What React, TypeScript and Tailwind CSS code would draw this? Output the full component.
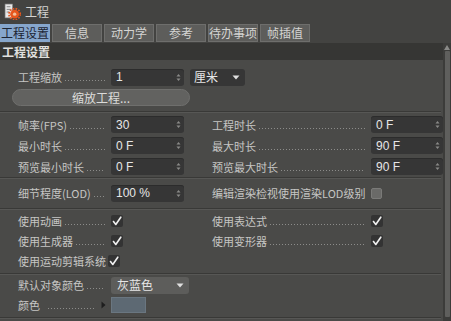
import React from 'react'

const font = { fontFamily: '"Noto Sans CJK SC", "Liberation Sans", sans-serif' }

function Spinner() {
  return (
    <svg width="5" height="9" viewBox="0 0 5 9" className="shrink-0">
      <path d="M0.5 3.5 L2.5 1 L4.5 3.5 Z" fill="#8a8a88" />
      <path d="M0.5 5.5 L2.5 8 L4.5 5.5 Z" fill="#8a8a88" />
    </svg>
  )
}

function Dots({ className = '' }: { className?: string }) {
  return <span className={`flex-1 h-[1px] mb-[4px] bg-[linear-gradient(to_right,#8c8c8a_1px,transparent_1px)] bg-[length:3px_1px] ${className}`} />
}

function Label({ text, w }: { text: string; w: string }) {
  return (
    <div className={`flex items-end shrink-0 ${w} pr-[6px]`}>
      <span className="whitespace-nowrap leading-[16px]">{text}</span>
      <Dots className="ml-[3px] min-w-[6px]" />
    </div>
  )
}

function Field({ value, w = 'w-[73px]' }: { value: string; w?: string }) {
  return (
    <div className={`${w} h-[17px] shrink-0 bg-[#363636] rounded-[3px] flex items-center justify-between pl-[5px] pr-[3px] text-[12px] text-[#e6e6e6] shadow-[inset_0_1px_0_#2c2c2c]`}>
      <span style={{ fontFamily: '"Liberation Sans", sans-serif' }}>{value}</span>
      <Spinner />
    </div>
  )
}

function Check({ on = true }: { on?: boolean }) {
  if (!on) {
    return <div className="w-[11px] h-[11px] shrink-0 rounded-[2px] bg-[#6a6a68] border border-[#7a7a78]" />
  }
  return (
    <div className="w-[12px] h-[12px] shrink-0 rounded-[2px] bg-[#333] flex items-center justify-center">
      <svg width="10" height="10" viewBox="0 0 10 10">
        <path d="M1.5 5.5 L3.8 8.5 L8.8 1.2" stroke="#f0f0f0" strokeWidth="1.6" fill="none" strokeLinecap="round" strokeLinejoin="round" />
      </svg>
    </div>
  )
}

function Sep() {
  return <div className="h-[2px] border-t border-[#393937] border-b border-b-[#575755] mr-[2px]" />
}

function Row({ children, h = 'h-[20px]' }: { children: React.ReactNode; h?: string }) {
  return <div className={`flex items-center ${h} pl-[18px]`}>{children}</div>
}

const tabs = ['工程设置', '信息', '动力学', '参考', '待办事项', '帧插值']

export default function App() {
  return (
    <div className="w-[451px] h-[321px] bg-[#4a4a48] overflow-hidden text-[11px] text-[#c6c6c4] flex flex-col" style={font}>
      {/* Title bar */}
      <div className="h-[23px] bg-[#434341] flex items-center pl-[4px] gap-[4px] shrink-0">
        <svg width="17" height="17" viewBox="0 0 16 16">
          <rect x="1" y="1" width="7" height="13" fill="#e8e8e8" stroke="#888" strokeWidth="0.6" />
          <path d="M2.5 3.5 H6 M2.5 6 H6 M2.5 8.5 H5" stroke="#777" strokeWidth="0.8" />
          <circle cx="10" cy="10.5" r="4.2" fill="#e8561c" />
          <circle cx="10" cy="10.5" r="5.3" fill="none" stroke="#e8561c" strokeWidth="1.6" strokeDasharray="1.6 1.2" />
          <circle cx="10" cy="10.5" r="1.6" fill="#f2c09a" />
        </svg>
        <span className="text-[12px] text-[#d4d4d2]">工程</span>
      </div>

      {/* Tabs */}
      <div className="h-[20px] bg-[#434341] flex items-start gap-[2px] shrink-0 pt-[1px]">
        {tabs.map((t, i) => (
          <div
            key={t}
            className={
              i === 0
                ? 'h-[18px] w-[50px] flex items-center justify-center bg-[#86a6cc] text-[#1c2433] text-[12px]'
                : 'h-[18px] w-[50px] flex items-center justify-center bg-[#5d5d5b] border border-[#6e6e6c] text-[#d4d4d2] text-[12px]'
            }
          >
            {t}
          </div>
        ))}
      </div>

      <div className="flex flex-1 min-h-0">
        <div className="flex-1 min-w-0 overflow-hidden">
          {/* Section header */}
          <div className="h-[17px] bg-[#363634] flex items-center pl-[2px] text-[12px] text-[#e0e0de] font-bold">工程设置</div>

          <div className="pt-[7px]">
            <Row>
              <Label text="工程缩放" w="w-[93px]" />
              <Field value="1" />
              <div className="ml-[6px] w-[55px] h-[17px] bg-[#363636] rounded-[3px] flex items-center justify-between pl-[4px] pr-[5px] text-[12px] text-[#e6e6e6]">
                <span>厘米</span>
                <svg width="8" height="5" viewBox="0 0 8 5"><path d="M0.5 0.5 H7.5 L4 4.5 Z" fill="#e0e0e0" /></svg>
              </div>
            </Row>
          </div>
          <div className="pl-[12px] pt-[2px] pb-[5px]">
            <div className="w-[178px] h-[17px] rounded-full bg-[#626260] border border-[#6f6f6d] flex items-center justify-center text-[12px] text-[#dcdcda]">缩放工程...</div>
          </div>
          <Sep />

          <div className="pt-[1px]">
            {[
              ['帧率(FPS)', '30', '工程时长', '0 F'],
              ['最小时长', '0 F', '最大时长', '90 F'],
              ['预览最小时长', '0 F', '预览最大时长', '90 F'],
            ].map(([a, av, b, bv]) => (
              <Row key={a} h="h-[21px]">
                <Label text={a} w="w-[93px]" />
                <Field value={av} />
                <div className="w-[28px] shrink-0" />
                <Label text={b} w="w-[159px]" />
                <Field value={bv} w="w-[72px]" />
              </Row>
            ))}
          </div>
          <Sep />

          <div className="pt-[4px] pb-[5px]">
            <Row>
              <Label text="细节程度(LOD)" w="w-[93px]" />
              <Field value="100 %" />
              <div className="w-[28px] shrink-0" />
              <span className="whitespace-nowrap mr-[6px]">编辑渲染检视使用渲染LOD级别</span>
              <Check on={false} />
            </Row>
          </div>
          <Sep />

          <div className="pt-[1px] pb-[2px]">
            {[
              ['使用动画', '使用表达式'],
              ['使用生成器', '使用变形器'],
            ].map(([a, b]) => (
              <Row key={a}>
                <Label text={a} w="w-[93px]" />
                <Check />
                <div className="w-[89px] shrink-0" />
                <Label text={b} w="w-[159px]" />
                <Check />
              </Row>
            ))}
            <Row>
              <span className="whitespace-nowrap mr-[2px]">使用运动剪辑系统</span>
              <Check />
            </Row>
          </div>
          <Sep />

          <Row>
            <Label text="默认对象颜色" w="w-[93px]" />
            <div className="w-[78px] h-[17px] bg-[#5d5d5b] rounded-[3px] flex items-center justify-between pl-[6px] pr-[5px] text-[12px] text-[#e6e6e6]">
              <span>灰蓝色</span>
              <svg width="8" height="5" viewBox="0 0 8 5"><path d="M0.5 0.5 H7.5 L4 4.5 Z" fill="#e0e0e0" /></svg>
            </div>
          </Row>
          <Row>
            <div className="flex items-end w-[83px] shrink-0 pr-[6px]">
              <span className="leading-[16px]">颜色</span>
              <Dots className="ml-[8px]" />
            </div>
            <svg width="5" height="8" viewBox="0 0 5 8" className="mr-[5px] shrink-0"><path d="M0.5 0.5 L4.5 4 L0.5 7.5 Z" fill="#1e1e1e" /></svg>
            <div className="w-[35px] h-[16px] bg-[#5d6973] border border-[#6a7680]" />
          </Row>
          <div className="mt-[2px]">
            <Sep />
          </div>
        </div>

        {/* Scrollbar */}
        <div className="w-[8px] bg-[#3c3c3a] flex flex-col items-center pt-[2px] shrink-0">
          <svg width="6" height="5" viewBox="0 0 6 5"><path d="M0 5 L3 0 L6 5 Z" fill="#8a8a88" /></svg>
          <div className="w-[5px] flex-1 bg-[#5f5f5d] mt-[1px] mb-[4px] rounded-[1px]" />
        </div>
      </div>
    </div>
  )
}
